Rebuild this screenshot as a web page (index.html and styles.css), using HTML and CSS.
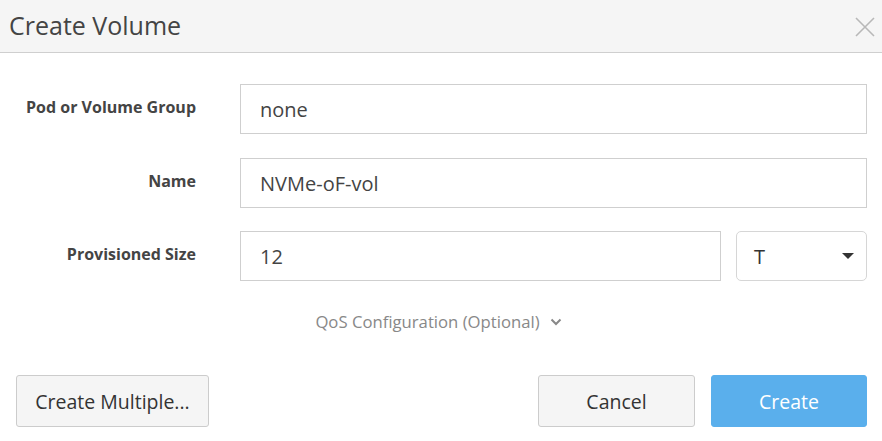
FILE: index.html
```html
<!DOCTYPE html>
<html>
<head>
<meta charset="utf-8">
<link rel="stylesheet" href="styles.css">
</head>
<body>
<div class="modal">
  <div class="modal-header">
    <h1 class="title">Create Volume</h1>
    <button class="close" aria-label="Close">
      <svg width="20" height="20" viewBox="0 0 20 20"><path d="M1 1 L19 19 M19 1 L1 19" stroke="#b8b8b8" stroke-width="1.6" fill="none"/></svg>
    </button>
  </div>
  <div class="modal-body">
    <div class="row">
      <label class="label">Pod or Volume Group</label>
      <div class="field"><div class="input">none</div></div>
    </div>
    <div class="row">
      <label class="label">Name</label>
      <div class="field"><div class="input">NVMe-oF-vol</div></div>
    </div>
    <div class="row">
      <label class="label">Provisioned Size</label>
      <div class="field split">
        <div class="input grow">12</div>
        <div class="select">T
          <svg class="caret" width="12" height="7" viewBox="0 0 12 7"><path d="M0 0 L12 0 L6 6 Z" fill="#333"/></svg>
        </div>
      </div>
    </div>
    <div class="qos">QoS Configuration (Optional)
      <svg class="chev" width="12" height="8" viewBox="0 0 12 8"><path d="M1.5 1.5 L6 6 L10.5 1.5" stroke="#888" stroke-width="2" fill="none"/></svg>
    </div>
  </div>
  <div class="modal-footer">
    <button class="btn">Create Multiple...</button>
    <div class="right">
      <button class="btn cancel">Cancel</button>
      <button class="btn primary">Create</button>
    </div>
  </div>
</div>
</body>
</html>
```
FILE: styles.css
```css
* { box-sizing: border-box; }
html, body { margin: 0; padding: 0; background: #fff; }
body { font-family: "Open Sans", "Liberation Sans", sans-serif; color: #444; width: 882px; height: 441px; overflow: hidden; }
.modal { width: 882px; }
.modal-header {
  height: 53px;
  background: #f5f5f5;
  border-bottom: 1px solid #cfcfcf;
  display: flex;
  align-items: center;
  justify-content: space-between;
  padding: 0 7px 0 9px;
}
.title { margin: 0; font-weight: 400; font-size: 25px; color: #444; padding-bottom: 2px; }
.close { background: none; border: 0; padding: 0; width: 20px; height: 20px; display: flex; margin-top: 1px; }
.modal-body { padding: 31px 15px 0 0; }
.row { display: flex; align-items: center; margin-bottom: 24px; }
.row:nth-child(2) { margin-bottom: 23px; }
.label { width: 196px; text-align: right; font-weight: 700; font-size: 16px; color: #444; padding-bottom: 5px; }
.field { margin-left: 44px; flex: 1; display: flex; }
.split { gap: 15px; }
.input {
  flex: 1;
  height: 50px;
  border: 1px solid #cfcfcf;
  padding: 0 19px;
  display: flex; align-items: center;
  font-size: 20px; color: #444;
}
.select {
  width: 131px; height: 50px;
  border: 1px solid #d6d6d6; border-radius: 5px;
  display: flex; align-items: center; justify-content: space-between;
  padding: 0 12px 0 17px;
  font-size: 20px; color: #333;
}
.qos { text-align: center; font-size: 16.7px; color: #888; margin: 29px 0 0 0; padding-left: 10px; display: flex; justify-content: center; align-items: center; gap: 10px; }
.chev { margin-top: 1px; }
.modal-footer { display: flex; justify-content: space-between; padding: 42px 15px 0 16px; }
.right { display: flex; gap: 16px; }
.btn {
  height: 52px;
  font-family: "Open Sans", "Liberation Sans", sans-serif;
  font-size: 19.5px; color: #333;
  background: #f5f5f5;
  border: 1px solid #cccccc; border-radius: 3px;
  padding: 0 8px;
  width: 193px;
}
.cancel { width: 157px; }
.primary { width: 156px; background: #5aafec; border-color: #5aafec; color: #fff; }
```
